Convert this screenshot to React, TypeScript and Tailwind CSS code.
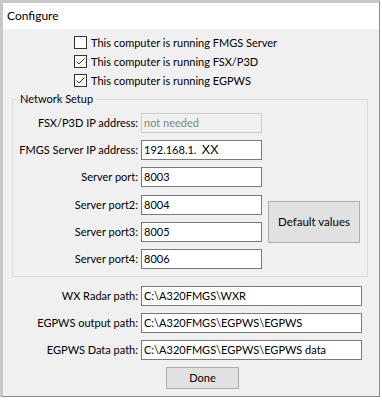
import React from "react";

const font = { fontFamily: 'Lato, "Noto Sans", sans-serif' };

function Check({ checked, label }: { checked: boolean; label: string }) {
  return (
    <div className="flex h-[19px] items-center">
      <div className="relative h-[13px] w-[13px] shrink-0 border border-[#333333] bg-white">
        {checked && (
          <svg width="11" height="11" viewBox="0 0 11 11" className="absolute left-0 top-0">
            <polyline points="1.5,5.5 4,8 9.5,2.5" fill="none" stroke="#333333" strokeWidth="1" />
          </svg>
        )}
      </div>
      <span className="ml-[4px] whitespace-nowrap leading-[16px]">{label}</span>
    </div>
  );
}

function Field({
  label,
  value,
  w,
  disabled,
  children,
}: {
  label: string;
  value?: string;
  w: string;
  disabled?: boolean;
  children?: React.ReactNode;
}) {
  return (
    <div className="flex h-[20px] items-center">
      <div className="w-[125px] shrink-0 whitespace-nowrap text-right leading-[16px]">{label}</div>
      <div
        className={
          "ml-[3px] flex h-[20px] shrink-0 items-center whitespace-nowrap px-[2px] leading-[16px] " +
          w +
          (disabled
            ? " border border-[#cccccc] bg-[#f0f0f0] text-[#838383]"
            : " border border-[#7a7a7a] bg-white text-black")
        }
      >
        {children ?? value}
      </div>
    </div>
  );
}

export default function App() {
  return (
    <div className="h-[402px] w-[382px] bg-white text-[11px] text-black" style={font}>
      <div className="flex h-[397px] w-[380px] flex-col border-[3px] border-[#c8c8c8] border-r-[#8a8a8a] border-r-[1px] border-b-[1px] border-b-[#8a8a8a] bg-[#f0f0f0]">
        <div className="flex h-[26px] shrink-0 items-center bg-white pl-[4px] text-[12px] leading-[16px]">
          Configure
        </div>
        <div className="flex flex-col pl-[71px] pt-[4px]">
          <Check checked={false} label="This computer is running FMGS Server" />
          <Check checked={true} label="This computer is running FSX/P3D" />
          <Check checked={true} label="This computer is running EGPWS" />
        </div>
        <fieldset className="ml-[9px] mt-[1px] w-[356px] border border-[#dcdcdc] pb-[7px]">
          <legend className="ml-[4px] px-[3px] leading-[16px]">Network Setup</legend>
          <div className="mt-[6px] flex">
            <div className="flex flex-col gap-[7.2px]">
              <Field label="FSX/P3D IP address:" value="not needed" w="w-[121px]" disabled />
              <Field label="FMGS Server IP address:" w="w-[121px]">
                <span>192.168.1.</span>
                <span
                  className="ml-[5px] text-[13px] leading-[16px]"
                  style={{ fontFamily: '"Liberation Sans", Arial, sans-serif' }}
                >
                  XX
                </span>
              </Field>
              <Field label="Server port:" value="8003" w="w-[121px]" />
              <Field label="Server port2:" value="8004" w="w-[121px]" />
              <Field label="Server port3:" value="8005" w="w-[121px]" />
              <Field label="Server port4:" value="8006" w="w-[121px]" />
            </div>
            <button className="ml-[6px] mt-[88px] h-[42px] w-[92px] self-start border border-[#adadad] bg-[#e1e1e1] text-[11.5px] leading-[16px]">
              Default values
            </button>
          </div>
        </fieldset>
        <div className="mt-[9px] flex flex-col gap-[7px] pl-[10px]">
          <Field label="WX Radar path:" value="C:\A320FMGS\WXR" w="w-[221px]" />
          <Field label="EGPWS output path:" value="C:\A320FMGS\EGPWS\EGPWS" w="w-[221px]" />
          <Field label="EGPWS Data path:" value="C:\A320FMGS\EGPWS\EGPWS data" w="w-[221px]" />
        </div>
        <button className="ml-[163px] mt-[7px] h-[22px] w-[73px] border border-[#adadad] bg-[#e1e1e1] leading-[16px]">
          Done
        </button>
      </div>
    </div>
  );
}
